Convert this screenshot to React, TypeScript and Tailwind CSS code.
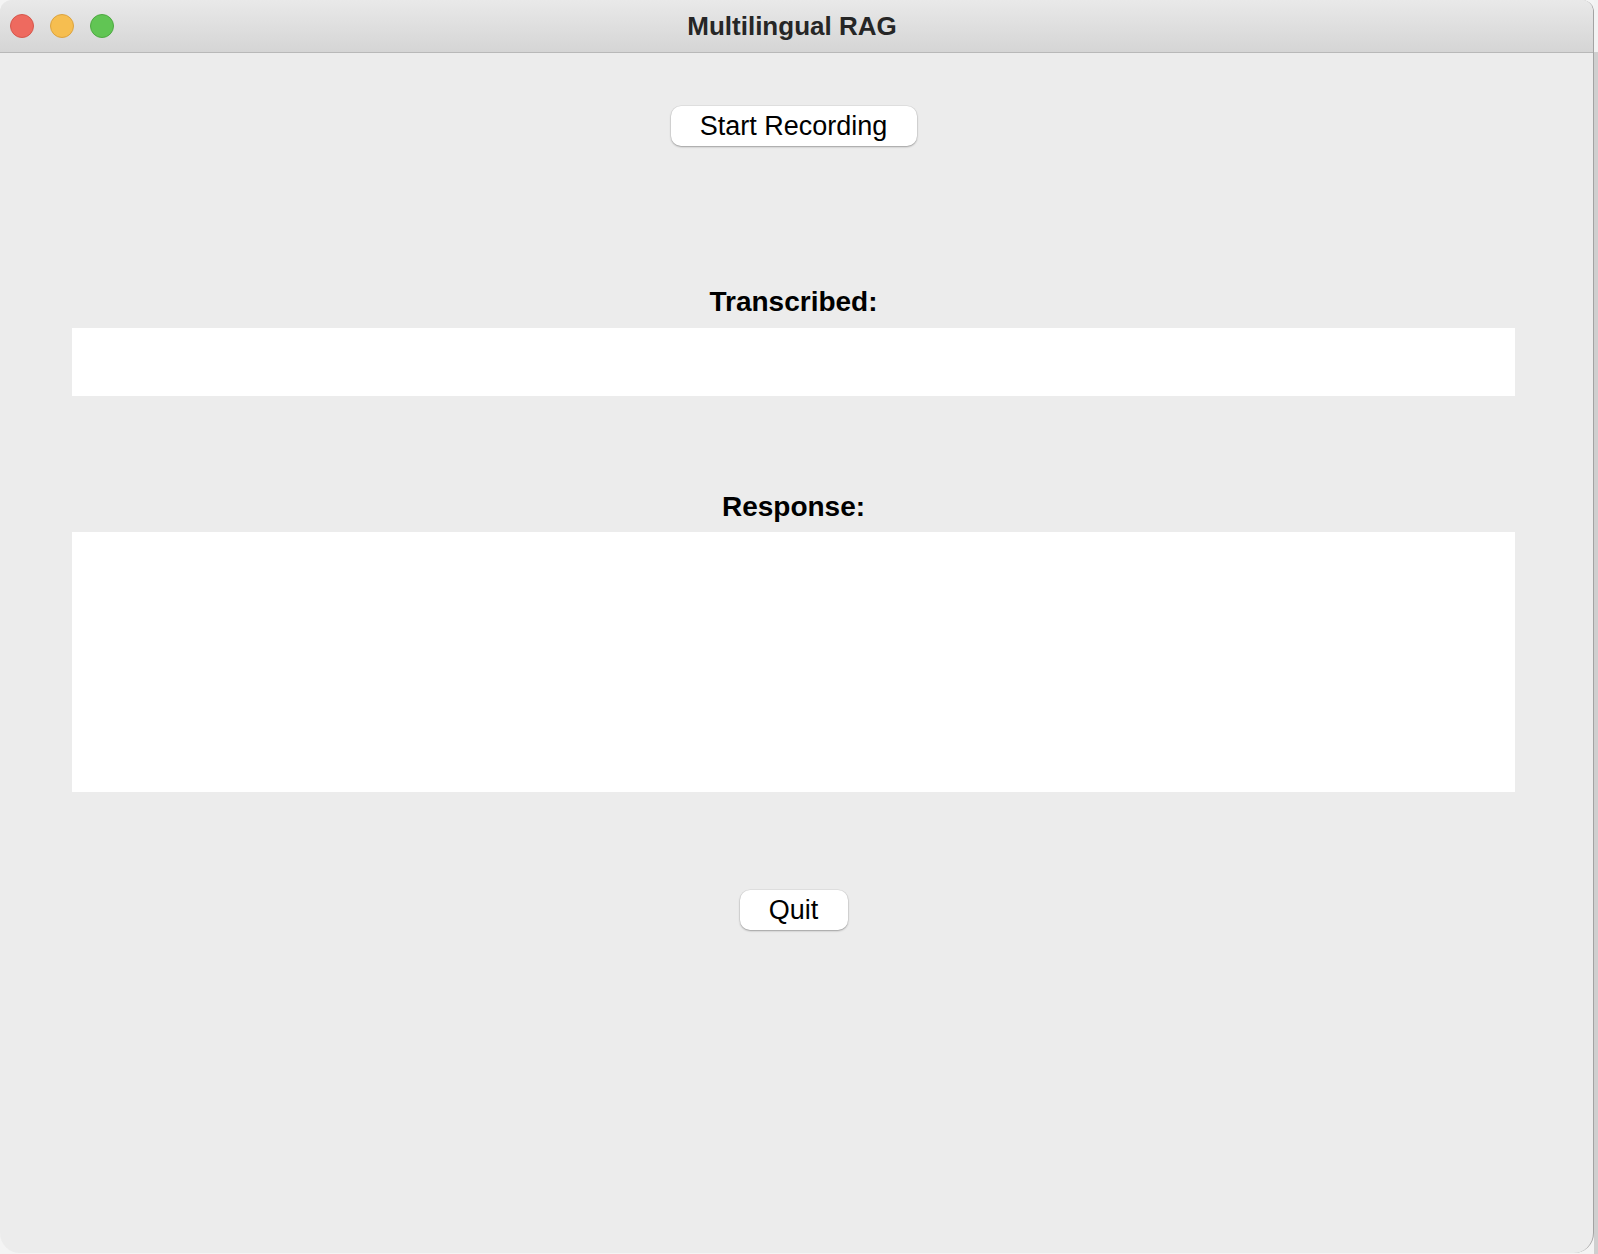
export default function App() {
  return (
    <div
      className="w-[1598px] h-[1254px] flex bg-[#f4f4f4]"
      style={{ fontFamily: '"Liberation Sans", Arial, sans-serif' }}
    >
      <div className="w-[1594px] h-[1253px] flex flex-col bg-[#ececec] rounded-t-[12px] rounded-b-[20px] overflow-hidden border-r border-[#a3a3a3]">
        <div className="h-[53px] shrink-0 grid grid-cols-[1fr_auto_1fr] items-center border-b border-[#b8b8b8] bg-gradient-to-b from-[#e9e9e9] to-[#d5d5d5]">
          <div className="flex items-center gap-[16px] pl-[10px] pb-[1px]">
            <span className="w-[24px] h-[24px] rounded-full bg-[#ee6a5f] border border-[#d6574c]" />
            <span className="w-[24px] h-[24px] rounded-full bg-[#f6be50] border border-[#dca33f]" />
            <span className="w-[24px] h-[24px] rounded-full bg-[#61c554] border border-[#4ea942]" />
          </div>
          <div className="text-[26px] font-bold leading-[26px] text-[#262626] pr-[9px] pb-[1px]">
            Multilingual RAG
          </div>
          <div />
        </div>

        <div className="flex flex-col items-center pl-[72px] pr-[78px]">
          <button className="mt-[53px] h-[40px] w-[246px] rounded-[10px] bg-white text-[27px] leading-none text-black shadow-[0_1px_2px_rgba(0,0,0,0.3),0_0_0_0.5px_rgba(0,0,0,0.08)] flex items-center justify-center">
            Start Recording
          </button>

          <div className="mt-[142px] text-[28px] leading-[28px] font-bold text-black">Transcribed:</div>
          <div className="mt-[12px] h-[68px] w-full bg-white" />

          <div className="mt-[97px] text-[28px] leading-[28px] font-bold text-black">Response:</div>
          <div className="mt-[11px] h-[260px] w-full bg-white" />

          <button className="mt-[98px] h-[40px] w-[108px] rounded-[10px] bg-white text-[27px] leading-none text-black shadow-[0_1px_2px_rgba(0,0,0,0.3),0_0_0_0.5px_rgba(0,0,0,0.08)] flex items-center justify-center">
            Quit
          </button>
        </div>
      </div>
      <div className="flex-1 flex flex-col">
        <div className="h-[52px] bg-[#f2f2f2]" />
        <div className="flex-1 bg-[#cfcfcf]" />
      </div>
    </div>
  );
}
